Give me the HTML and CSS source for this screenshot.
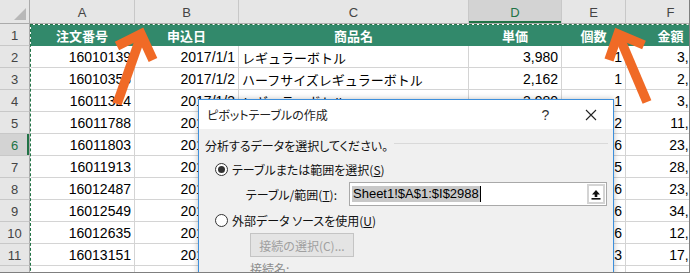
FILE: index.html
```html
<!DOCTYPE html>
<html lang="ja">
<head>
  <meta charset="UTF-8">
  <meta name="viewport" content="width=device-width, initial-scale=1.0">
  <title>ピボットテーブルの作成</title>
  <link rel="stylesheet" href="styles.css">
</head>
<body>
  <div class="screen">
    <div class="sheet">
      <div class="cell corner"></div>
      <div class="cell col-head">A</div>
      <div class="cell col-head">B</div>
      <div class="cell col-head">C</div>
      <div class="cell col-head sel">D</div>
      <div class="cell col-head">E</div>
      <div class="cell col-head">F</div>

      <div class="cell row-head">1</div>
      <div class="cell thead">注文番号</div>
      <div class="cell thead">申込日</div>
      <div class="cell thead">商品名</div>
      <div class="cell thead">単価</div>
      <div class="cell thead">個数</div>
      <div class="cell thead">金額</div>

      <div class="cell row-head">2</div>
      <div class="cell num">16010139</div>
      <div class="cell num">2017/1/1</div>
      <div class="cell jp">レギュラーボトル</div>
      <div class="cell num">3,980</div>
      <div class="cell num">1</div>
      <div class="cell num">3,980</div>

      <div class="cell row-head">3</div>
      <div class="cell num">16010358</div>
      <div class="cell num">2017/1/2</div>
      <div class="cell jp">ハーフサイズレギュラーボトル</div>
      <div class="cell num">2,162</div>
      <div class="cell num">1</div>
      <div class="cell num">2,162</div>

      <div class="cell row-head">4</div>
      <div class="cell num">16011324</div>
      <div class="cell num">2017/1/3</div>
      <div class="cell jp">レギュラーボトル</div>
      <div class="cell num">3,980</div>
      <div class="cell num">1</div>
      <div class="cell num">3,980</div>

      <div class="cell row-head">5</div>
      <div class="cell num">16011788</div>
      <div class="cell num">2017/1/3</div>
      <div class="cell jp">プレミアムボトル</div>
      <div class="cell num">5,980</div>
      <div class="cell num">2</div>
      <div class="cell num">11,960</div>

      <div class="cell row-head sel">6</div>
      <div class="cell num">16011803</div>
      <div class="cell num">2017/1/4</div>
      <div class="cell jp">レギュラーボトル</div>
      <div class="cell num">3,980</div>
      <div class="cell num">6</div>
      <div class="cell num">23,880</div>

      <div class="cell row-head">7</div>
      <div class="cell num">16011913</div>
      <div class="cell num">2017/1/4</div>
      <div class="cell jp">ミニボトル</div>
      <div class="cell num">5,780</div>
      <div class="cell num">5</div>
      <div class="cell num">28,900</div>

      <div class="cell row-head">8</div>
      <div class="cell num">16012487</div>
      <div class="cell num">2017/1/5</div>
      <div class="cell jp">レギュラーボトル</div>
      <div class="cell num">3,980</div>
      <div class="cell num">6</div>
      <div class="cell num">23,880</div>

      <div class="cell row-head">9</div>
      <div class="cell num">16012549</div>
      <div class="cell num">2017/1/5</div>
      <div class="cell jp">ミニボトル</div>
      <div class="cell num">5,780</div>
      <div class="cell num">6</div>
      <div class="cell num">34,680</div>

      <div class="cell row-head">10</div>
      <div class="cell num">16012635</div>
      <div class="cell num">2017/1/6</div>
      <div class="cell jp">ハーフサイズレギュラーボトル</div>
      <div class="cell num">2,162</div>
      <div class="cell num">6</div>
      <div class="cell num">12,972</div>

      <div class="cell row-head">11</div>
      <div class="cell num">16013151</div>
      <div class="cell num">2017/1/6</div>
      <div class="cell jp">ミニボトル</div>
      <div class="cell num">5,780</div>
      <div class="cell num">3</div>
      <div class="cell num">17,340</div>

      <div class="cell row-head">12</div>
      <div class="cell num">16013427</div>
      <div class="cell num">2017/1/7</div>
      <div class="cell jp">レギュラーボトル</div>
      <div class="cell num">3,980</div>
      <div class="cell num">1</div>
      <div class="cell num">3,980</div>
    </div>

    <!-- copy range marquee -->
    <div class="ants"></div>

    <svg class="arrows" width="690" height="273" viewBox="0 0 690 273">
      <g stroke="#f06a26" stroke-width="9.5" fill="none" stroke-linejoin="miter">
        <line x1="117" y1="104" x2="141" y2="36"/>
        <polyline points="117,46 141,34 153,60"/>
        <line x1="647" y1="102" x2="619" y2="36"/>
        <polyline points="609,60 618,34 644,45"/>
      </g>
    </svg>

    <div class="dialog">
      <div class="dlg-title">
        <span class="dlg-caption">ピボットテーブルの作成</span>
        <span class="dlg-btn help">?</span>
        <span class="dlg-btn">
          <svg width="12" height="12" viewBox="0 0 12 12">
            <path d="M1 1 L11 11 M11 1 L1 11" stroke="#222" stroke-width="1.1"/>
          </svg>
        </span>
      </div>
      <div class="dlg-body">
        <div class="group-title">分析するデータを選択してください。</div>

        <label class="radio-row">
          <span class="radio checked"></span>
          <span>テーブルまたは範囲を選択(<u>S</u>)</span>
        </label>

        <div class="range-row">
          <span class="range-label">テーブル/範囲(<u>T</u>):</span>
          <div class="range-input">
            <span class="range-text">Sheet1!$A$1:$I$2988</span>
            <span class="caret"></span>
            <span class="collapse-btn">
              <svg width="10" height="11" viewBox="0 0 10 11">
                <path d="M5 1 L9 5.5 H6.3 V8 H3.7 V5.5 H1 Z" fill="#111"/>
                <rect x="0.5" y="9" width="9" height="1.6" fill="#111"/>
              </svg>
            </span>
          </div>
        </div>

        <label class="radio-row">
          <span class="radio"></span>
          <span>外部データ ソースを使用(<u>U</u>)</span>
        </label>

        <div class="btn-disabled">接続の選択(C)...</div>
        <div class="conn-name">接続名:</div>
      </div>
    </div>
  </div>
</body>
</html>
```

FILE: styles.css
```css
html, body {
  margin: 0;
  padding: 0;
}

.screen {
  position: relative;
  width: 690px;
  height: 273px;
  overflow: hidden;
  box-sizing: border-box;
  border-right: 1px solid #7f7f7f;
  border-bottom: 1px solid #7f7f7f;
  background: #fff;
}

/* spreadsheet grid */
.sheet {
  display: grid;
  grid-template-columns: 30px 105px 104px 230px 93px 64px 90px;
  grid-template-rows: 24px repeat(12, 22px);
  font-family: "Liberation Sans", "Noto Sans CJK JP", sans-serif;
  font-size: 14px;
  color: #000;
}

.cell {
  display: flex;
  align-items: center;
  box-sizing: border-box;
  padding: 1px 3px 0;
  border-right: 1px solid #d4d4d4;
  border-bottom: 1px solid #d4d4d4;
  white-space: nowrap;
  overflow: hidden;
}

.num {
  justify-content: flex-end;
}

.jp {
  font-family: "Noto Sans CJK JP", sans-serif;
  font-size: 13px;
}

.corner {
  position: relative;
  background: #e6e6e6;
  border-right-color: #ababab;
  border-bottom-color: #ababab;
}

.corner::after {
  content: "";
  position: absolute;
  right: 3px;
  bottom: 3px;
  width: 12px;
  height: 12px;
  background: #b8b8b8;
  clip-path: polygon(100% 0, 100% 100%, 0 100%);
}

.col-head {
  justify-content: center;
  background: #e6e6e6;
  color: #444;
  font-size: 13px;
  border-right-color: #c8c8c8;
  border-bottom-color: #ababab;
}

.row-head {
  justify-content: center;
  background: #e6e6e6;
  color: #444;
  font-size: 13px;
  padding: 1px 0 0;
  border-right-color: #ababab;
  border-bottom-color: #c8c8c8;
}

.col-head.sel {
  background: #d3d3d3;
  color: #217346;
  box-shadow: inset 0 -2px #217346;
}

.row-head.sel {
  background: #d3d3d3;
  color: #217346;
  box-shadow: inset -2px 0 #217346;
}

.thead {
  justify-content: center;
  background: #32896b;
  border-color: #32896b;
  color: #fff;
  font-family: "Noto Sans CJK JP", sans-serif;
  font-size: 13px;
  font-weight: bold;
}

/* marching ants around the copied range */
.ants {
  position: absolute;
  left: 30px;
  top: 24px;
  width: 900px;
  height: 400px;
  border-top: 1px solid #fff;
  border-left: 1px solid #fff;
  pointer-events: none;
}

.ants::after {
  content: "";
  position: absolute;
  left: -1px;
  top: -1px;
  right: 0;
  bottom: 0;
  border-top: 1px dashed #217346;
  border-left: 1px dashed #217346;
}

.arrows {
  position: absolute;
  left: 0;
  top: 0;
  pointer-events: none;
}

/* pivot table dialog */
.dialog {
  position: absolute;
  left: 198px;
  top: 99px;
  width: 416px;
  height: 200px;
  box-sizing: border-box;
  border: 1px solid #3c8fdc;
  background: #f0f0f0;
  box-shadow: 0 0 6px rgba(0, 0, 0, .25);
  font-family: "Noto Sans CJK JP", sans-serif;
  font-size: 12px;
  font-feature-settings: "palt";
  color: #111;
}

.dlg-title {
  display: flex;
  align-items: center;
  height: 29px;
  padding-left: 8px;
  background: #fff;
}

.dlg-caption {
  flex: 1;
  color: #222;
}

.dlg-btn {
  display: flex;
  align-items: center;
  justify-content: center;
  width: 45px;
  height: 29px;
}

.help {
  font-family: "Liberation Sans", sans-serif;
  font-size: 14px;
  color: #333;
}

.dlg-body {
  display: flex;
  flex-direction: column;
  padding: 6px 5px 0 6px;
}

.group-title {
  display: flex;
  align-items: center;
  gap: 6px;
  height: 20px;
}

.group-title::after {
  content: "";
  flex: 1;
  margin-top: -3px;
  border-top: 1px solid #d9d9d9;
}

.radio-row {
  display: flex;
  align-items: center;
  gap: 4px;
  height: 20px;
  margin-top: 4px;
  padding-left: 10px;
}

.radio {
  position: relative;
  width: 13px;
  height: 13px;
  box-sizing: border-box;
  border: 1px solid #333;
  border-radius: 50%;
  background: #fff;
}

.radio.checked::after {
  content: "";
  position: absolute;
  left: 2px;
  top: 2px;
  width: 7px;
  height: 7px;
  border-radius: 50%;
  background: #333;
}

.range-row {
  display: flex;
  align-items: center;
  gap: 12px;
  margin-top: 3px;
}

.range-label {
  width: 132px;
  text-align: right;
}

.range-input {
  display: flex;
  align-items: center;
  width: 258px;
  height: 24px;
  box-sizing: border-box;
  padding-left: 2px;
  border: 1px solid #a9a9a9;
  background: #fff;
}

.range-text {
  padding: 0 1px;
  background: #c8c8c8;
  font-family: "Liberation Sans", sans-serif;
  font-size: 13px;
  line-height: 16px;
  color: #000;
}

.caret {
  width: 1px;
  height: 16px;
  background: #000;
}

.collapse-btn {
  display: flex;
  align-items: center;
  justify-content: center;
  width: 18px;
  height: 20px;
  margin-left: auto;
  margin-right: 1px;
  box-sizing: border-box;
  border: 2px solid #d4d4d4;
  background: #fff;
}

.btn-disabled {
  display: flex;
  align-items: center;
  justify-content: center;
  width: 104px;
  height: 24px;
  margin: 3px 0 0 45px;
  box-sizing: border-box;
  border: 1px solid #c4c4c4;
  background: #e4e4e4;
  color: #a0a0a0;
}

.conn-name {
  margin: 3px 0 0 45px;
  color: #8c8c8c;
}
```
